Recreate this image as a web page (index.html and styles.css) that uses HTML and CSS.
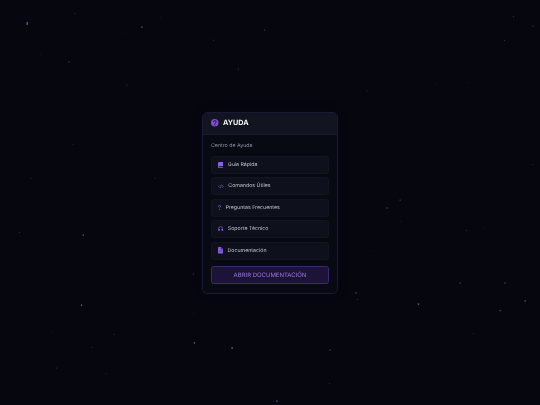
FILE: index.html
```html
<!DOCTYPE html>
<html lang="es">
<head>
<meta charset="utf-8">
<title>Ayuda</title>
<link rel="stylesheet" href="styles.css">
</head>
<body>
<svg class="stars" viewBox="0 0 540 405" aria-hidden="true">
  <g class="s-bright">
    <rect x="26.5" y="22" width="1.4" height="3"/><rect x="141.3" y="26.5" width="1.4" height="1.2"/>
    <rect x="82.6" y="234.3" width="1.2" height="1.6"/><rect x="193.8" y="342" width="1.2" height="1.8"/>
    <rect x="231.3" y="347.3" width="1.6" height="1.6"/><rect x="417.8" y="303.3" width="1.4" height="1.6"/>
    <rect x="81" y="304.3" width="1.2" height="1.8"/>
  </g>
  <g class="s-blue">
    <rect x="68.3" y="61.4" width="1.6" height="1.2"/><rect x="237.8" y="68.6" width="1.1" height="1.1"/>
    <rect x="264" y="29.5" width="1.1" height="1.2"/><rect x="532.5" y="25.6" width="1.4" height="1"/>
    <rect x="386.6" y="207.2" width="1.4" height="1.6"/><rect x="399.5" y="199.5" width="1.3" height="1.3"/>
    <rect x="459.6" y="282.4" width="1.3" height="1.5"/><rect x="504.3" y="282.4" width="1.4" height="1.5"/>
    <rect x="355.3" y="292.2" width="1.6" height="1.6"/><rect x="499.3" y="310" width="1.8" height="1.4"/>
    <rect x="524.3" y="300" width="1.8" height="1.8"/><rect x="329.4" y="349.3" width="1.6" height="1.4"/>
    <rect x="276" y="400.3" width="1.8" height="1.8"/><rect x="55.8" y="367.6" width="1" height="1"/>
    <rect x="192.8" y="273.6" width="1.2" height="1.2"/>
  </g>
  <g class="s-dim">
    <rect x="74.6" y="13" width="1" height="1"/><rect x="126.4" y="84.7" width="1.2" height="1"/>
    <rect x="213" y="39.7" width="1" height="1"/><rect x="513" y="16" width="1" height="1"/>
    <rect x="504" y="40" width="1" height="1"/><rect x="366.5" y="90.5" width="1" height="1"/>
    <rect x="72.8" y="143.8" width=".8" height="1"/><rect x="30.5" y="178" width="1" height=".8"/>
    <rect x="154.8" y="177.8" width="1" height="1"/><rect x="19" y="232" width="1" height="1"/>
    <rect x="532" y="164" width="1" height=".8"/><rect x="466" y="230" width="1" height="1"/>
    <rect x="91.8" y="347" width="1" height="1"/><rect x="113.8" y="334" width="1" height="1"/>
    <rect x="105.5" y="373" width="1" height=".8"/><rect x="329" y="383" width=".8" height="1"/>
    <rect x="357" y="299" width="1" height="1"/><rect x="473" y="333" width=".8" height="1"/>
  </g>
  <g class="s-faint">
    <rect x="160" y="16.5" width="1" height="1"/><rect x="435" y="83" width="1" height="1"/>
    <rect x="468" y="82" width="1" height="1"/><rect x="400" y="221" width="1" height="1"/>
    <rect x="483" y="228" width="1" height="1"/><rect x="373" y="250" width="1" height="1"/>
    <rect x="52" y="331" width="1" height="1"/><rect x="193" y="313" width="1" height="1"/>
    <rect x="40" y="54" width="1" height="1"/><rect x="122" y="33" width="1" height="1"/>
  </g>
</svg>

<main class="page">
  <section class="card">
    <header class="card-head">
      <svg class="head-icon" viewBox="0 0 16 16" aria-hidden="true">
        <circle cx="8" cy="8" r="8" fill="#7d4fd6"/>
        <path d="M5 6.300C5.100 4.500 6.400 3.400 8.100 3.400c1.800 0 3 1.100 3 2.600 0 1.200-.7 1.800-1.500 2.300-.8.500-1.300 1-1.300 1.900" fill="none" stroke="#170d2c" stroke-width="2"/>
        <circle cx="8.200" cy="12.500" r="1.300" fill="#170d2c"/>
      </svg>
      <h1 class="card-title">AYUDA</h1>
    </header>
    <div class="card-body">
      <p class="section-label">Centro de Ayuda</p>
      <ul class="menu">
        <li class="menu-item">
          <svg class="ico ico-book" viewBox="0 0 14 16" aria-hidden="true">
            <path d="M3 0h11v11.500H3.200a1.300 1.300 0 0 0 0 2.600H14V16H3a3 3 0 0 1-3-3V3a3 3 0 0 1 3-3z" fill="#8a5fe8"/>
          </svg>
          <span>Guía Rápida</span>
        </li>
        <li class="menu-item">
          <svg class="ico ico-code" viewBox="0 0 20 14" aria-hidden="true">
            <path d="M5.500 3 1.500 7l4 4M14.500 3l4 4-4 4M11.800 1 8.200 13" fill="none" stroke="#8a5fe8" stroke-width="2.200"/>
          </svg>
          <span>Comandos Útiles</span>
        </li>
        <li class="menu-item">
          <svg class="ico ico-q" viewBox="0 0 10 16" aria-hidden="true">
            <path d="M1.300 5C1.400 2.600 2.900 1.300 5 1.300c2.200 0 3.700 1.200 3.700 3.100 0 1.500-.9 2.300-2 3C5.800 8 5.200 8.600 5.200 10" fill="none" stroke="#8a5fe8" stroke-width="2.800"/>
            <circle cx="5.200" cy="14" r="1.900" fill="#8a5fe8"/>
          </svg>
          <span>Preguntas Frecuentes</span>
        </li>
        <li class="menu-item">
          <svg class="ico ico-head" viewBox="0 0 16 15" aria-hidden="true">
            <path d="M2 10V7.500a6 6 0 0 1 12 0V10" fill="none" stroke="#8a5fe8" stroke-width="2"/>
            <rect x="1" y="8" width="4" height="6.500" rx="1.300" fill="#8a5fe8"/>
            <rect x="11" y="8" width="4" height="6.500" rx="1.300" fill="#8a5fe8"/>
          </svg>
          <span>Soporte Técnico</span>
        </li>
        <li class="menu-item">
          <svg class="ico ico-file" viewBox="0 0 12 16" aria-hidden="true">
            <path d="M1.500 0H7v4.500c0 .5.500 1 1 1h4v9A1.500 1.500 0 0 1 10.500 16h-9A1.500 1.500 0 0 1 0 14.500v-13A1.500 1.500 0 0 1 1.500 0zM8.200 0 12 4H8.200z" fill="#8a5fe8"/>
            <path d="M3 8.500h6M3 11h6" stroke="#4a3488" stroke-width="1"/>
          </svg>
          <span>Documentación</span>
        </li>
      </ul>
      <button class="cta" type="button">ABRIR DOCUMENTACIÓN</button>
    </div>
  </section>
</main>
</body>
</html>
```

FILE: styles.css
```css
* { box-sizing: border-box; }

html, body {
  margin: 0;
  width: 540px;
  height: 405px;
  overflow: hidden;
  background: #05060e;
  font-family: Inter, "Liberation Sans", sans-serif;
  text-rendering: geometricPrecision;
}

.stars {
  position: absolute;
  left: 0;
  top: 0;
  width: 540px;
  height: 405px;
  filter: blur(.2px);
}
.s-bright { fill: #5c5c72; }
.s-blue { fill: #333360; }
.s-dim { fill: #2e2e40; }
.s-faint { fill: #15161f; }

.page {
  position: relative;
  width: 540px;
  height: 405px;
  display: flex;
  align-items: flex-start;
  justify-content: center;
  padding-top: 111.500px;
}

.card {
  width: 136px;
  height: 182.500px;
  border: 1px solid #1a1934;
  border-radius: 5px;
  background: #070913;
  box-shadow: 0 0 14px rgba(60, 40, 140, .07);
  overflow: hidden;
  filter: blur(.3px);
}

.card-head {
  height: 22.500px;
  display: flex;
  align-items: center;
  gap: 4.500px;
  padding-left: 8px;
  padding-bottom: .5px;
  background: #12141f;
  border-bottom: 1px solid #1b1b33;
}

.head-icon { width: 7.500px; height: 7.500px; flex: none; }

.card-title {
  margin: 0;
  font-size: 7.200px;
  line-height: 10px;
  font-weight: 700;
  color: #f4f4f8;
}

.card-body {
  padding: 7.500px 8px 0;
}

.section-label {
  margin: 0 0 6px;
  height: 7px;
  font-size: 5.250px;
  line-height: 7px;
  color: #9496a6;
}

.menu {
  list-style: none;
  margin: 0;
  padding: 0;
  display: flex;
  flex-direction: column;
  gap: 3.500px;
}

.menu-item {
  height: 18px;
  display: flex;
  align-items: center;
  gap: 4.500px;
  padding-left: 6px;
  border-radius: 2.500px;
  background: #0e101b;
  border: .5px solid #131523;
  font-size: 5.250px;
  color: #c4c6d2;
}

.ico { flex: none; }
.ico-book { width: 5.300px; height: 6px; }
.ico-code { width: 5.800px; height: 4.800px; }
.ico-q { width: 3px; height: 5px; }
.ico-head { width: 5.300px; height: 5.300px; }
.ico-file { width: 5px; height: 6.500px; }

.cta {
  display: block;
  width: 100%;
  height: 18px;
  margin-top: 6.500px;
  padding: 0;
  border: .75px solid #3a2a6e;
  border-radius: 2.500px;
  background: #1d1238;
  color: #9a7ee0;
  font-family: inherit;
  font-size: 6px;
  text-rendering: geometricPrecision;
}
```
